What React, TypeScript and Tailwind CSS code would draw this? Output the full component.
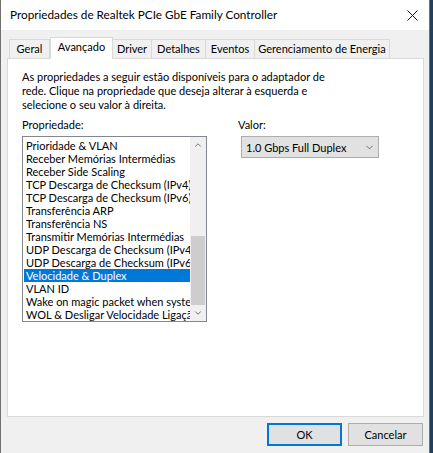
import { ChevronDown, ChevronUp } from 'lucide-react';

const tabs = [
  { label: 'Geral', w: 'w-[41px]' },
  { label: 'Avançado', w: 'w-[63px]', active: true },
  { label: 'Driver', w: 'w-[40px]' },
  { label: 'Detalhes', w: 'w-[55px]' },
  { label: 'Eventos', w: 'w-[50px]' },
  { label: 'Gerenciamento de Energia', w: 'w-[136px]' },
];

const items = [
  'Prioridade & VLAN',
  'Receber Memórias Intermédias',
  'Receber Side Scaling',
  'TCP Descarga de Checksum (IPv4)',
  'TCP Descarga de Checksum (IPv6)',
  'Transferência ARP',
  'Transferência NS',
  'Transmitir Memórias Intermédias',
  'UDP Descarga de Checksum (IPv4)',
  'UDP Descarga de Checksum (IPv6)',
  'Velocidade & Duplex',
  'VLAN ID',
  'Wake on magic packet when system is in S0ix power state',
  'WOL & Desligar Velocidade Ligação',
];

export default function App() {
  return (
    <div className="flex w-[433px] h-[453px] overflow-hidden bg-[#20405e] font-['Lato',sans-serif] text-[11px] text-black whitespace-nowrap">
      {/* Dialog window */}
      <div className="flex flex-col w-[430px] h-full bg-[#f0f0f0] border-x border-[#707070]">
        {/* Title bar */}
        <div className="flex items-center justify-between h-[30px] bg-white pl-[9px] pr-[9px] shrink-0">
          <span className="text-[11.75px] leading-none">Propriedades de Realtek PCIe GbE Family Controller</span>
          <svg width="11" height="11" viewBox="0 0 11 11" className="mr-[2px]">
            <path d="M0.5 0.5 L10.5 10.5 M10.5 0.5 L0.5 10.5" stroke="#111" strokeWidth="1" />
          </svg>
        </div>

        {/* Tabs */}
        <div className="flex items-end h-[28px] pl-[8px] pt-[6px] shrink-0">
          {tabs.map((t) =>
            t.active ? (
              <div
                key={t.label}
                className={`${t.w} h-[22px] -mb-px relative z-10 bg-white border border-b-0 border-[#d9d9d9] flex items-start justify-center pt-[2px] leading-[14px]`}
              >
                {t.label}
              </div>
            ) : (
              <div
                key={t.label}
                className={`${t.w} h-[19px] -ml-px first:ml-0 bg-[#f0f0f0] border border-b-0 border-[#d9d9d9] flex items-center justify-center leading-[14px]`}
              >
                {t.label}
              </div>
            )
          )}
        </div>

        {/* Tab panel */}
        <div className="ml-[6px] w-[417px] h-[359px] bg-white border border-[#d9d9d9] pl-[14px] pt-[11px] shrink-0">
          <p className="leading-[14px]">
            As propriedades a seguir estão disponíveis para o adaptador de
            <br />
            rede. Clique na propriedade que deseja alterar à esquerda e
            <br />
            selecione o seu valor à direita.
          </p>

          <div className="flex mt-[6px]">
            <div className="w-[185px]">
              <div className="leading-[14px] h-[18px]">Propriedade:</div>
              <div className="flex w-[185px] h-[186px] border border-[#828790] bg-white">
                <div className="flex-1 min-w-0 pt-[2px] pl-px overflow-hidden">
                  {items.map((it) => (
                    <div
                      key={it}
                      className={`h-[13px] leading-[13px] pl-[2px] overflow-hidden ${
                        it === 'Velocidade & Duplex' ? 'bg-[#0078d7] text-white' : ''
                      }`}
                    >
                      {it}
                    </div>
                  ))}
                </div>
                {/* Scrollbar */}
                <div className="w-[16px] flex flex-col bg-[#f0f0f0] shrink-0">
                  <div className="h-[17px] flex items-center justify-center text-[#606060]">
                    <ChevronUp size={10} strokeWidth={2} />
                  </div>
                  <div className="flex-1 flex flex-col">
                    <div className="h-[82px]" />
                    <div className="h-[69px] mx-px bg-[#cdcdcd]" />
                  </div>
                  <div className="h-[17px] flex items-center justify-center text-[#606060]">
                    <ChevronDown size={10} strokeWidth={2} />
                  </div>
                </div>
              </div>
            </div>

            <div className="ml-[31px]">
              <div className="leading-[14px] h-[18px]">Valor:</div>
              <div className="ml-[3px] w-[138px] h-[22px] bg-[#e1e1e1] border border-[#adadad] flex items-center justify-between pl-[4px] pr-[3px]">
                <span className="leading-none">1.0 Gbps Full Duplex</span>
                <ChevronDown size={11} strokeWidth={1.5} className="text-[#404040]" />
              </div>
            </div>
          </div>
        </div>

        {/* Buttons */}
        <div className="flex justify-end gap-[6px] pr-[6px] mt-[6px]">
          <button className="w-[75px] h-[23px] bg-[#e1e1e1] border-2 border-[#0078d7] leading-none">OK</button>
          <button className="w-[75px] h-[23px] bg-[#e1e1e1] border border-[#adadad] leading-none">Cancelar</button>
        </div>
      </div>
    </div>
  );
}
